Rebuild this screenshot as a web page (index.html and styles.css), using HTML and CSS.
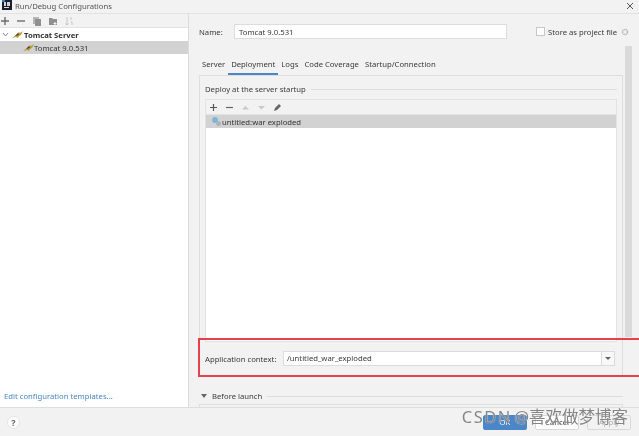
FILE: index.html
```html
<!DOCTYPE html>
<html lang="en">
  <head>
    <meta charset="UTF-8" />
    <title>Run/Debug Configurations</title>
    <link rel="stylesheet" href="styles.css">
  </head>
  <body>
    <div class="window">
      <div class="titlebar">
        <svg class="logo" width="10" height="11" viewBox="0 0 10 11">
          <rect width="10" height="11" fill="#1b1f2b"/>
          <rect width="3" height="3" fill="#2b7fd0"/>
          <rect x="2" y="8" width="5" height="1" fill="#ddd"/>
          <rect x="2" y="3" width="2" height="4" fill="#cfd3da"/>
          <rect x="5" y="3" width="3" height="4" fill="#cfd3da"/>
        </svg>
        <span class="title">Run/Debug Configurations</span>
        <svg class="close" width="8" height="8" viewBox="0 0 8 8">
          <path d="M1 1l6 6M7 1L1 7" stroke="#555" stroke-width="1" fill="none"/>
        </svg>
      </div>

      <div class="main">
        <div class="sidebar">
          <div class="side-tools">
            <svg width="10" height="10" viewBox="0 0 10 10"><path d="M5 1v8M1 5h8" stroke="#6e6e6e" stroke-width="1.4"/></svg>
            <svg width="10" height="10" viewBox="0 0 10 10"><path d="M1 5h8" stroke="#6e6e6e" stroke-width="1.4"/></svg>
            <svg width="10" height="10" viewBox="0 0 10 10"><rect x="1" y="1" width="6" height="7" fill="#b5b5b5"/><rect x="3" y="3" width="6" height="7" fill="#8f8f8f"/></svg>
            <svg width="10" height="10" viewBox="0 0 10 10"><path d="M1 2h3l1 1h4v6H1z" fill="#8f8f8f"/><path d="M7 6v3M5.500 7.500h3" stroke="#f2f2f2"/></svg>
            <svg width="10" height="10" viewBox="0 0 10 10"><path d="M3 1v8M1.500 7.500L3 9l1.500-1.500M7 1v3M7 6h1v3" stroke="#c4c4c4" fill="none"/></svg>
          </div>
          <div class="tree">
            <div class="tree-row parent">
              <svg class="chevron" width="7" height="5" viewBox="0 0 7 5"><path d="M1 1l2.500 3L6 1" stroke="#8a8a8a" fill="none"/></svg>
              <svg class="cat" width="11" height="8" viewBox="0 0 11 8"><path d="M0 7l4-3 3-3 1 1 3-2-2 4-2 1-1 2-2-1z" fill="#b99a3c"/><path d="M3 5l3-3 1 2z" fill="#4d4230"/></svg>
              <span>Tomcat Server</span>
            </div>
            <div class="tree-row child">
              <svg class="cat" width="11" height="8" viewBox="0 0 11 8"><path d="M0 7l4-3 3-3 1 1 3-2-2 4-2 1-1 2-2-1z" fill="#b99a3c"/><path d="M3 5l3-3 1 2z" fill="#4d4230"/></svg>
              <span>Tomcat 9.0.531</span>
            </div>
            <a class="templates" href="#">Edit configuration templates...</a>
          </div>
        </div>

        <div class="content">
          <div class="name-row">
            <label class="name-label">Name:</label>
            <div class="name-input">Tomcat 9.0.531</div>
            <span class="checkbox"></span>
            <span class="store">Store as project file</span>
            <svg class="gear" width="8" height="8" viewBox="0 0 8 8"><circle cx="4" cy="4" r="2.500" fill="none" stroke="#b8b8b8" stroke-width="1.600" stroke-dasharray="1.400 .6"/></svg>
          </div>

          <div class="body">
            <div class="tabs">
              <span class="tab">Server</span>
              <span class="tab active">Deployment</span>
              <span class="tab">Logs</span>
              <span class="tab">Code Coverage</span>
              <span class="tab">Startup/Connection</span>
            </div>

            <div class="panel">
              <div class="legend"><span>Deploy at the server startup</span><i></i></div>
              <div class="deploy">
                <div class="deploy-tools">
                  <svg width="9" height="9" viewBox="0 0 9 9"><path d="M4.500 1v7M1 4.500h7" stroke="#555" stroke-width="1.200"/></svg>
                  <svg width="9" height="9" viewBox="0 0 9 9"><path d="M1 4.500h7" stroke="#666" stroke-width="1.200"/></svg>
                  <svg width="9" height="9" viewBox="0 0 9 9"><path d="M1 6.500l3.500-3.500 3.500 3.500z" fill="#c9c9c9"/></svg>
                  <svg width="9" height="9" viewBox="0 0 9 9"><path d="M1 3l3.500 3.500L8 3z" fill="#c9c9c9"/></svg>
                  <svg width="9" height="9" viewBox="0 0 9 9"><path d="M1 8l1-3 4-4 2 2-4 4z" fill="#666"/></svg>
                </div>
                <div class="artifact">
                  <svg width="11" height="11" viewBox="0 0 11 11"><circle cx="4" cy="4" r="3" fill="#7fb6d8"/><circle cx="7.500" cy="7.500" r="2.500" fill="#a9b4bb"/></svg>
                  <span>untitled:war exploded</span>
                </div>
              </div>
              <div class="context">
                <span class="context-label">Application context:</span>
                <div class="context-box">
                  <div class="context-value">/untitled_war_exploded</div>
                  <div class="context-arrow"></div>
                </div>
              </div>
            </div>

            <div class="scrollbar"></div>
          </div>

          <div class="before">
            <span class="triangle"></span>
            <span>Before launch</span>
            <i></i>
          </div>
          <div class="before-box"></div>
        </div>
      </div>

      <div class="footer">
        <span class="help">?</span>
        <div class="buttons">
          <button class="btn ok">OK</button>
          <button class="btn">Cancel</button>
          <button class="btn apply">Apply</button>
        </div>
      </div>

      <div class="highlight"></div>
      <div class="watermark"><span class="wm-latin">CSDN</span> @喜欢做梦博客</div>
    </div>
  </body>
</html>
```

FILE: styles.css
```css
* {
  box-sizing: border-box;
}

html,
body {
  margin: 0;
  height: 100%;
  overflow: hidden;
}

body {
  background-color: #f2f2f2;
  font-family: "Noto Sans", "Noto Sans CJK SC", sans-serif;
  font-size: 7.7px;
  color: #3a3a3a;
}

.window {
  position: relative;
  display: flex;
  flex-direction: column;
  width: 639px;
  height: 436px;
  overflow: hidden;
  filter: blur(0.4px);
}

/* title */
.titlebar {
  display: flex;
  align-items: center;
  height: 14px;
  flex-shrink: 0;
  padding: 0 5px 2px 2px;
  border-bottom: 1px solid #e3e3e3;
}

.logo {
  margin-top: -3px;
}

.title {
  margin-left: 3px;
  color: #555;
}

.close {
  margin-left: auto;
}

.main {
  display: flex;
  flex: 1;
  min-height: 0;
}

/* left side */
.sidebar {
  display: flex;
  flex-direction: column;
  width: 189px;
  flex-shrink: 0;
  border-right: 1px solid #dcdcdc;
}

.side-tools {
  display: flex;
  align-items: center;
  gap: 6px;
  height: 14px;
  border-bottom: 1px solid #e3e3e3;
}

.tree {
  display: flex;
  flex-direction: column;
  flex: 1;
  background-color: white;
}

.tree-row {
  display: flex;
  align-items: center;
  height: 13px;
  color: #333;
}

.tree-row.parent {
  padding-left: 2px;
  font-weight: bold;
}

.tree-row.child {
  padding-left: 23px;
  background-color: #d2d2d2;
}

.chevron {
  margin-right: 3px;
}

.parent .cat {
  margin-right: 1px;
}

.templates {
  margin-top: auto;
  padding: 0 0 6px 4px;
  color: #4a86c8;
  text-decoration: none;
}

/* right side */
.content {
  display: flex;
  flex-direction: column;
  flex: 1;
  min-width: 0;
  padding-left: 10px;
}

.name-row {
  display: flex;
  align-items: center;
  height: 16px;
  margin-top: 10px;
}

.name-label {
  width: 35px;
}

.name-input {
  display: flex;
  align-items: center;
  width: 273px;
  height: 15px;
  padding-left: 4px;
  background-color: white;
  border: 1px solid #dcdcdc;
}

.checkbox {
  width: 9px;
  height: 9px;
  margin-left: 29px;
  background-color: white;
  border: 1px solid #c8c8c8;
}

.store {
  margin-left: 3px;
}

.gear {
  margin-left: 4px;
}

.body {
  position: relative;
  display: flex;
  flex-direction: column;
  height: 330px;
  flex-shrink: 0;
  margin-top: 6px;
}

.tabs {
  display: flex;
  gap: 6px;
  height: 30px;
  flex-shrink: 0;
  padding: 13px 0 0 3px;
}

.tab {
  height: 17px;
  padding-top: 1px;
  white-space: nowrap;
}

.tab.active {
  margin: 0 -3px;
  padding: 1px 3px 0;
  border-bottom: 2px solid #4a86c8;
}

.panel {
  display: flex;
  flex-direction: column;
  width: 424px;
  flex: 1;
  padding: 7px 5px 0 5px;
  border: 1px solid #dedede;
  border-bottom: none;
}

.legend,
.before {
  display: flex;
  align-items: center;
  gap: 5px;
}

.legend {
  height: 12px;
}

.legend i,
.before i {
  flex: 1;
  height: 1px;
  background-color: #dcdcdc;
}

.deploy {
  display: flex;
  flex-direction: column;
  height: 243px;
  flex-shrink: 0;
  margin-top: 4px;
  background-color: white;
  border: 1px solid #e3e3e3;
}

.deploy-tools {
  display: flex;
  align-items: center;
  gap: 7px;
  height: 15px;
  flex-shrink: 0;
  padding-left: 3px;
  background-color: #f2f2f2;
  border-bottom: 1px solid #e3e3e3;
}

.artifact {
  display: flex;
  align-items: center;
  height: 13px;
  padding-left: 5px;
  background-color: #d2d2d2;
  color: #333;
}

.context {
  display: flex;
  align-items: center;
  margin-top: 9px;
}

.context-label {
  width: 78px;
  flex-shrink: 0;
  white-space: nowrap;
}

.context-box {
  display: flex;
  width: 332px;
  height: 15px;
  background-color: white;
  border: 1px solid #dcdcdc;
}

.context-value {
  flex: 1;
  padding-left: 3px;
  line-height: 13px;
}

.context-arrow {
  position: relative;
  width: 13px;
  border-left: 1px solid #dcdcdc;
  background-color: #f8f8f8;
}

.context-arrow::after {
  content: "";
  position: absolute;
  left: 3px;
  top: 5px;
  border: 3px solid transparent;
  border-top: 3px solid #666;
}

.scrollbar {
  position: absolute;
  right: 7px;
  top: 1px;
  bottom: 38px;
  width: 7px;
  background-color: #dadada;
}

.before {
  width: 424px;
  height: 12px;
  flex-shrink: 0;
  margin-top: 15px;
  padding-left: 2px;
}

.before-box {
  width: 424px;
  height: 3px;
  margin-top: 2px;
  border: 1px solid #dedede;
  border-bottom: none;
}

.triangle {
  border: 3px solid transparent;
  border-top: 4px solid #666;
  border-bottom: none;
}

/* bottom */
.footer {
  display: flex;
  align-items: center;
  height: 29px;
  flex-shrink: 0;
  padding: 0 8px 0 7px;
  border-top: 1px solid #dedede;
}

.help {
  width: 13px;
  height: 13px;
  line-height: 11px;
  text-align: center;
  font-size: 9px;
  font-weight: bold;
  color: #666;
  background-color: white;
  border: 1px solid #e3e3e3;
  border-radius: 50%;
}

.buttons {
  display: flex;
  gap: 8px;
  margin-left: auto;
}

.btn {
  width: 44px;
  height: 15px;
  padding: 0;
  font: inherit;
  color: #333;
  background-color: white;
  border: 1px solid #d8d8d8;
  border-radius: 2px;
}

.btn.ok {
  background-color: #4a86c8;
  border-color: #4a86c8;
  color: white;
}

.btn.apply {
  background-color: #f2f2f2;
  color: #aaa;
}

/* overlays */
.highlight {
  position: absolute;
  left: 198px;
  top: 338px;
  width: 445px;
  height: 39px;
  border: 2px solid #e8404a;
}

.watermark {
  position: absolute;
  right: 11px;
  top: 405px;
  font-size: 16.5px;
  line-height: 24px;
  word-spacing: -2px;
  color: #858585;
  text-shadow: 0 0 1px white;
  white-space: nowrap;
}

.wm-latin {
  letter-spacing: 1.5px;
}
```
